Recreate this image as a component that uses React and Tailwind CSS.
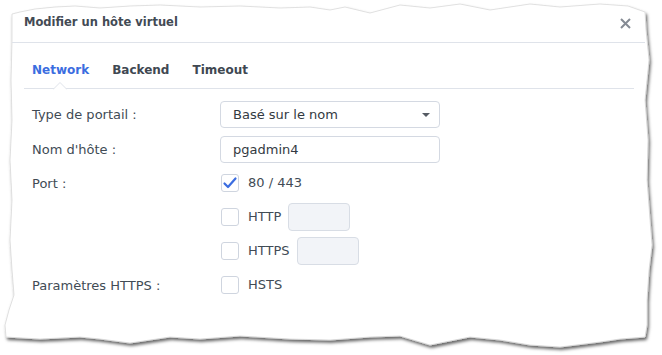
import React from "react";

function Check({ checked }) {
  return (
    <div className="w-[18px] h-[18px] shrink-0 rounded-[3px] border border-[#cfd5df] bg-white flex items-center justify-center">
      {checked && (
        <svg width="16" height="16" viewBox="0 0 16 16">
          <path d="M2.5 8.5 L6 12 L13.5 3.5" fill="none" stroke="#3b6de0" strokeWidth="2.2" strokeLinecap="round" strokeLinejoin="round" />
        </svg>
      )}
    </div>
  );
}

function Row({ label, className = "", children }) {
  return (
    <div className={"flex items-center " + className}>
      <div className="w-[188px] shrink-0 text-[13px] text-[#414b55] leading-none">{label}</div>
      <div className="flex items-center">{children}</div>
    </div>
  );
}

const paper =
  "M12,14 L20,12 L35,9 L55,7 L75,6 L100,8 L130,6 L160,5 L200,7 L240,6 L280,8 L310,7 L330,10 L345,7 L370,13 L400,5 L430,8 L460,4 L490,10 L530,4 L560,7 L600,4 L628,6 L645,12 " +
  "L646,30 L649,60 L645,100 L648,140 L647,180 L650,220 L652,245 L649,270 L647,300 L647,325 L645,337 " +
  "L620,339 L600,342 L560,347 L530,345 L500,340 L470,337 L430,345 L400,336 L370,337 L330,340 L290,339 L240,336 L200,339 L170,337 L130,343 L100,339 L80,337 L40,339 L6,337 " +
  "L5,325 L9,310 L14,295 L12,270 L10,240 L12,200 L10,160 L12,120 L11,80 L12,40 Z";

export default function App() {
  return (
    <div className="relative w-[662px] h-[355px] bg-white overflow-hidden font-['DejaVu_Sans',sans-serif]">
      <svg className="absolute inset-0" width="662" height="355" viewBox="0 0 662 355">
        <defs>
          <filter id="sh" x="-5%" y="-5%" width="110%" height="115%">
            <feDropShadow dx="1.5" dy="2.5" stdDeviation="1.6" floodColor="#000" floodOpacity="0.6" />
          </filter>
        </defs>
        <path d={paper} fill="#fff" stroke="#d9d9d9" strokeWidth="0.8" filter="url(#sh)" />
      </svg>

      <div className="relative ml-[12px] w-[633px]">
        {/* header */}
        <div className="h-[43px] border-b border-[#dfe3ea] flex items-center justify-between pl-3 pr-[14px] pt-[4px]">
          <span className="text-[11.5px] font-bold text-[#434a54]">Modifier un hôte virtuel</span>
          <svg width="11" height="11" viewBox="0 0 11 11" className="mt-[1px]">
            <path d="M1 1 L10 10 M10 1 L1 10" stroke="#858b94" strokeWidth="2" />
          </svg>
        </div>

        {/* tabs */}
        <div className="relative mx-3 w-[610px] h-[46px] border-b border-[#dfe3ea] flex items-center pt-[8px] pl-2 gap-[23px] text-[12px] font-bold">
          <span className="text-[#3b6de0]">Network</span>
          <span className="text-[#404852]">Backend</span>
          <span className="text-[#404852]">Timeout</span>
          <svg className="absolute left-[29px] top-[38px]" width="14" height="9" viewBox="0 0 14 9">
            <path d="M0 8.5 L7 1.5 L14 8.5" fill="#fff" stroke="#dfe3ea" strokeWidth="1" />
          </svg>
        </div>

        {/* form */}
        <div className="pl-5 flex flex-col">
          <Row label="Type de portail :" className="mt-[12px] h-[27px]">
            <div className="w-[220px] h-[27px] rounded-[4px] border border-[#d4d9e2] flex items-center justify-between pl-3 pr-[9px] text-[13px] text-[#333a42]">
              <span>Basé sur le nom</span>
              <svg width="8" height="4" viewBox="0 0 8 4">
                <path d="M0 0 L8 0 L4 4 Z" fill="#555b63" />
              </svg>
            </div>
          </Row>
          <Row label="Nom d'hôte :" className="mt-[8px] h-[27px]">
            <div className="w-[220px] h-[27px] rounded-[4px] border border-[#d4d9e2] flex items-center pl-3 text-[13px] text-[#333a42]">
              pgadmin4
            </div>
          </Row>
          <Row label="Port :" className="mt-[11px] h-[18px]">
            <div className="ml-[1px] flex items-center">
              <Check checked />
              <span className="ml-[9px] text-[13px] text-[#414b55]">80 / 443</span>
            </div>
          </Row>
          <Row label="" className="mt-[11px] h-[28px]">
            <div className="ml-[1px] flex items-center">
              <Check />
              <span className="ml-[9px] text-[13px] text-[#414b55]">HTTP</span>
              <div className="ml-[7px] w-[62px] h-[28px] rounded-[4px] border border-[#d8dde5] bg-[#f2f4f8]" />
            </div>
          </Row>
          <Row label="" className="mt-[6px] h-[28px]">
            <div className="ml-[1px] flex items-center">
              <Check />
              <span className="ml-[9px] text-[13px] text-[#414b55]">HTTPS</span>
              <div className="ml-[7px] w-[62px] h-[28px] rounded-[4px] border border-[#d8dde5] bg-[#f2f4f8]" />
            </div>
          </Row>
          <Row label="Paramètres HTTPS :" className="mt-[11px] h-[18px]">
            <div className="ml-[1px] flex items-center">
              <Check />
              <span className="ml-[9px] text-[13px] text-[#414b55]">HSTS</span>
            </div>
          </Row>
        </div>
      </div>
    </div>
  );
}
